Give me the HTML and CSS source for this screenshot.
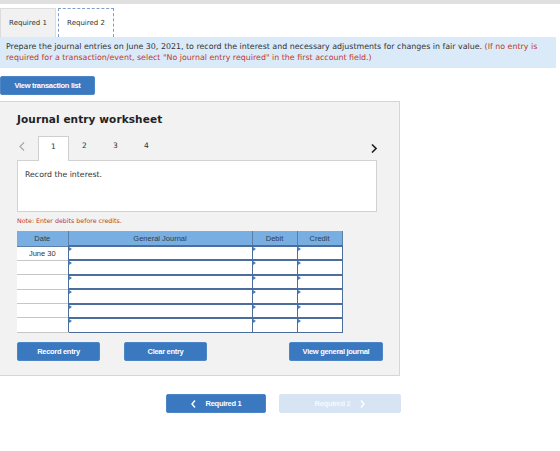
FILE: index.html
```html
<!DOCTYPE html>
<html lang="en">
<head>
    <meta charset="UTF-8">
    <title>Journal entry worksheet</title>
    <link rel="stylesheet" href="styles.css">
</head>
<body>
    <div class="topbar"></div>

    <div class="req-tabs">
        <div class="req-tab">Required 1</div>
        <div class="req-tab active">Required 2</div>
    </div>

    <div class="instructions">
        <div>Prepare the journal entries on June 30, 2021, to record the interest and necessary adjustments for changes in fair value. <span class="warn">(If no entry is</span></div>
        <div class="warn">required for a transaction/event, select "No journal entry required" in the first account field.)</div>
    </div>

    <div class="actions-top">
        <button class="btn btn-wide">View transaction list</button>
    </div>

    <div class="worksheet">
        <h2>Journal entry worksheet</h2>

        <div class="steps">
            <span class="arrow prev">
                <svg width="6" height="9" viewBox="0 0 6 9"><path d="M5 0.5 L1 4.5 L5 8.5" fill="none" stroke="#a8a8a8" stroke-width="1.2"/></svg>
            </span>
            <span class="step current">1</span>
            <span class="step">2</span>
            <span class="step">3</span>
            <span class="step">4</span>
            <span class="arrow next">
                <svg width="6" height="9" viewBox="0 0 6 9"><path d="M1 0.5 L5 4.5 L1 8.5" fill="none" stroke="#222" stroke-width="1.6"/></svg>
            </span>
        </div>

        <div class="desc">Record the interest.</div>

        <p class="note">Note: Enter debits before credits.</p>

        <table class="journal">
            <thead>
                <tr>
                    <th class="c-date">Date</th>
                    <th class="c-acct">General Journal</th>
                    <th class="c-num">Debit</th>
                    <th class="c-num">Credit</th>
                </tr>
            </thead>
            <tbody>
                <tr><td class="date">June 30</td><td class="in"></td><td class="in"></td><td class="in"></td></tr>
                <tr><td class="date"></td><td class="in"></td><td class="in"></td><td class="in"></td></tr>
                <tr><td class="date"></td><td class="in"></td><td class="in"></td><td class="in"></td></tr>
                <tr><td class="date"></td><td class="in"></td><td class="in"></td><td class="in"></td></tr>
                <tr><td class="date"></td><td class="in"></td><td class="in"></td><td class="in"></td></tr>
                <tr><td class="date"></td><td class="in"></td><td class="in"></td><td class="in"></td></tr>
            </tbody>
        </table>

        <div class="ws-buttons">
            <button class="btn">Record entry</button>
            <button class="btn">Clear entry</button>
            <button class="btn btn-journal">View general journal</button>
        </div>
    </div>

    <div class="pager">
        <button class="btn nav-prev">
            <svg width="5" height="8" viewBox="0 0 5 8"><path d="M4 0.5 L1 4 L4 7.5" fill="none" stroke="white" stroke-width="1.4"/></svg>
            Required 1
        </button>
        <button class="btn nav-next">
            Required 2
            <svg width="5" height="8" viewBox="0 0 5 8"><path d="M1 0.5 L4 4 L1 7.5" fill="none" stroke="white" stroke-width="1.4"/></svg>
        </button>
    </div>
</body>
</html>
```

FILE: styles.css
```css
* {
    margin: 0;
    padding: 0;
    box-sizing: border-box;
}

body {
    font-family: 'DejaVu Sans', Verdana, sans-serif;
    background: white;
    color: #333;
    width: 560px;
}

.topbar {
    height: 4px;
    background: #e0e0e0;
}

.req-tabs {
    display: flex;
    gap: 2px;
    margin-top: 4px;
    height: 29px;
}

.req-tab {
    width: 56px;
    border: 1px solid #dcdcdc;
    border-bottom: none;
    background: #f1f1f1;
    font-size: 7px;
    line-height: 28px;
    text-align: center;
    color: #333;
}

.req-tab.active {
    background: white;
    border: 1px dashed #7f9dc6;
    border-bottom: none;
}

.instructions {
    background: #dbeaf8;
    padding: 4px 6px 5px;
    font-size: 7.9px;
    line-height: 11px;
    color: #333;
    width: 556px;
    height: 31px;
    white-space: nowrap;
}

.warn {
    color: #c0392b;
}

.actions-top {
    display: flex;
    padding-top: 8px;
}

.btn {
    display: flex;
    align-items: center;
    justify-content: center;
    gap: 10px;
    background: #3a78bf;
    color: white;
    border: 1px solid #4c86c6;
    border-radius: 2px;
    font-family: 'Liberation Sans', Arial, sans-serif;
    font-weight: bold;
    font-size: 7.5px;
    height: 19px;
    width: 83px;
    cursor: pointer;
    letter-spacing: -0.3px;
}

.btn-wide {
    width: 95px;
}

.worksheet {
    margin-top: 6px;
    width: 400px;
    height: 275px;
    background: #f2f2f2;
    border: 1px solid #d6d6d6;
    border-left: none;
    padding: 0 0 0 17px;
}

.worksheet h2 {
    font-size: 10.5px;
    font-weight: bold;
    color: #222;
    margin-top: 11px;
    height: 22px;
    letter-spacing: 0.1px;
}

.steps {
    display: flex;
    align-items: flex-end;
    height: 25px;
    width: 360px;
    font-size: 7.5px;
    color: #333;
}

.arrow {
    height: 21px;
    display: flex;
    align-items: flex-start;
    padding-top: 3px;
}

.arrow.prev {
    width: 21px;
    padding-left: 2px;
}

.arrow.next {
    margin-left: auto;
    width: 6px;
    padding-top: 5px;
}

.step {
    width: 31px;
    height: 22px;
    line-height: 16px;
    text-align: center;
}

.step.current {
    background: white;
    border: 1px solid #cfcfcf;
    border-bottom: none;
    height: 25px;
    line-height: 19px;
    position: relative;
    top: 1px;
}

.desc {
    width: 360px;
    height: 52px;
    background: white;
    border: 1px solid #d2d2d2;
    padding: 9px 7px;
    font-size: 7.8px;
    color: #333;
}

.note {
    color: #c0392b;
    font-size: 6.3px;
    margin-top: 5px;
    height: 14px;
}

.journal {
    border-collapse: collapse;
    font-family: 'Liberation Sans', Arial, sans-serif;
    font-size: 7.5px;
    color: #333;
    background: white;
}

.journal th {
    background: #78aee2;
    font-weight: normal;
    height: 15px;
    border: 1px solid #5a7fa8;
    border-top: none;
    color: #2c3e50;
}

.journal th:first-child {
    border-left: none;
}

.c-date { width: 51px; }
.c-acct { width: 184px; }
.c-num { width: 45px; }

.journal td {
    height: 14.4px;
    padding: 0;
}

.journal td.date {
    text-align: center;
    border-bottom: 1px solid #c6c6c6;
    color: #333;
}

.journal td.in {
    border: 1px solid #4b6e9c;
    border-top: 2px solid #4b6e9c;
    border-bottom: 0;
    position: relative;
}

.journal tr:last-child td.in {
    border-bottom: 1px solid #4b6e9c;
}

.journal td.in::before {
    content: "";
    position: absolute;
    left: 0;
    top: 0;
    border-left: 3px solid #3a7fd0;
    border-top: 2px solid transparent;
    border-bottom: 2px solid transparent;
}

.ws-buttons {
    display: flex;
    margin-top: 9px;
    gap: 24px;
}

.btn-journal {
    width: 94px;
    margin-left: 58px;
}

.pager {
    display: flex;
    gap: 13px;
    margin: 18px 0 0 166px;
}

.nav-prev {
    width: 100px;
}

.nav-next {
    width: 122px;
    background: #d7e4f3;
    border-color: #d7e4f3;
    color: #f5f9fd;
}
```
